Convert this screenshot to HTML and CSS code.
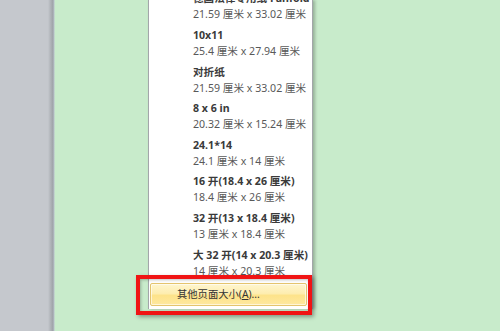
FILE: index.html
```html
<!DOCTYPE html>
<html lang="zh-CN">
<head>
<meta charset="utf-8">
<title>页面大小</title>
<link rel="stylesheet" href="styles.css">
</head>
<body>
<div class="stage">
  <div class="sidebar"></div>
  <div class="gap"></div>
  <div class="menu">
    <ul class="sizes">
      <li class="size"><span class="name">德国法律专用纸 Fanfold</span><span class="dim">21.59 厘米 x 33.02 厘米</span></li>
      <li class="size"><span class="name">10x11</span><span class="dim">25.4 厘米 x 27.94 厘米</span></li>
      <li class="size"><span class="name">对折纸</span><span class="dim">21.59 厘米 x 33.02 厘米</span></li>
      <li class="size"><span class="name">8 x 6 in</span><span class="dim">20.32 厘米 x 15.24 厘米</span></li>
      <li class="size"><span class="name">24.1*14</span><span class="dim">24.1 厘米 x 14 厘米</span></li>
      <li class="size"><span class="name">16 开(18.4 x 26 厘米)</span><span class="dim">18.4 厘米 x 26 厘米</span></li>
      <li class="size"><span class="name">32 开(13 x 18.4 厘米)</span><span class="dim">13 厘米 x 18.4 厘米</span></li>
      <li class="size"><span class="name">大 32 开(14 x 20.3 厘米)</span><span class="dim">14 厘米 x 20.3 厘米</span></li>
    </ul>
    <div class="more">其他页面大小(<u>A</u>)...</div>
  </div>
  <div class="highlight"></div>
</div>
</body>
</html>
```
FILE: styles.css
```css
html, body {
  margin: 0;
  padding: 0;
}
body {
  width: 500px;
  height: 331px;
  overflow: hidden;
  background: #c8ebcb;
  font-family: "Noto Sans", "Noto Sans CJK SC", sans-serif;
}
.stage {
  position: relative;
  display: flex;
  align-items: flex-start;
  height: 331px;
}
.sidebar {
  width: 55px;
  height: 331px;
  flex: none;
  background: linear-gradient(to right, #c5c8cd 0, #c5c8cd 48px, #b4b8bd 50px, #9ea2a8 53px, #b9c0cc 54px, #c8ebcb 55px);
}
.gap {
  width: 93px;
  flex: none;
}
.menu {
  width: 163px;
  height: 309px;
  flex: none;
  background: #fff;
  border-left: 1px solid #a3a6aa;
  border-right: 1px solid #a3a6aa;
  box-shadow: 2px 0 3px rgba(0, 0, 0, 0.25);
  display: flex;
  flex-direction: column;
  overflow: hidden;
}
.sizes {
  list-style: none;
  margin: -11.9px 0 0;
  padding: 0;
}
.size {
  display: flex;
  flex-direction: column;
  padding: 2.3px 0 2.3px 44px;
  height: 32px;
}
.name {
  font-weight: bold;
  font-size: 10.6px;
  line-height: 16px;
  color: #3a3a3a;
  white-space: nowrap;
}
.dim {
  font-size: 10.6px;
  line-height: 16px;
  color: #595959;
  white-space: nowrap;
}
.more {
  margin: 2px 5px 0 1px;
  height: 21px;
  border: 1px solid #e4c46e;
  border-radius: 2px;
  background: linear-gradient(to bottom, #fff6cf 0%, #fdedb0 45%, #fde38a 55%, #fee8a0 100%);
  box-shadow: inset 0 0 0 1px rgba(255, 255, 255, 0.6);
  font-size: 10.3px;
  line-height: 21px;
  padding-left: 26px;
  color: #333;
}
.more u {
  text-decoration: underline;
}
.highlight {
  position: absolute;
  left: 136px;
  top: 275px;
  width: 168px;
  height: 32px;
  border: 4px solid #f01414;
  box-shadow: 2px 2px 4px rgba(0, 0, 0, 0.35), inset 1px 1px 3px rgba(0, 0, 0, 0.25);
}
```
